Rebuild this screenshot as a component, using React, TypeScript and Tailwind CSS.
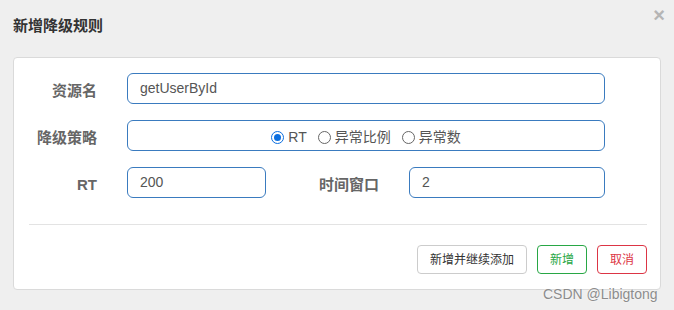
import React from 'react';

const font = { fontFamily: '"Liberation Sans", "Noto Sans CJK SC", sans-serif' };

function Radio({ checked, label }: { checked?: boolean; label: string }) {
  return (
    <label className="flex items-center gap-[4px]">
      <span
        className={`flex h-[13px] w-[13px] items-center justify-center rounded-full border ${
          checked ? 'border-[#0b6fe0]' : 'border-[#666]'
        }`}
      >
        {checked && <span className="h-[7px] w-[7px] rounded-full bg-[#0b6fe0]" />}
      </span>
      <span>{label}</span>
    </label>
  );
}

const inputCls =
  'flex h-[31px] items-center rounded-[6px] border border-[#3a7bbf] bg-white px-3 text-[14px] text-[#555]';
const labelCls = 'pt-[5px] text-right text-[15px] font-bold text-[#666]';

export default function App() {
  return (
    <div style={font} className="relative h-[310px] w-[674px] overflow-hidden bg-[#efefef]">
      <div className="flex h-[57px] items-start justify-between pl-[13px] pr-[9px]">
        <h4 className="pt-[15px] text-[15px] font-bold text-[#333]">新增降级规则</h4>
        <span className="pt-[3px] text-[20px] font-bold leading-[24px] text-[#b5b5b5]">×</span>
      </div>

      <div className="mx-[13px] h-[233px] rounded-[4px] border border-[#dadada] bg-white px-[15px] pt-[15px]">
        <div className="flex flex-col gap-4">
          <div className="flex items-center">
            <span className={`${labelCls} w-[68px]`}>资源名</span>
            <div className={`${inputCls} ml-[30px] w-[478px]`}>getUserById</div>
          </div>
          <div className="flex items-center">
            <span className={`${labelCls} w-[68px]`}>降级策略</span>
            <div className={`${inputCls} ml-[30px] w-[478px] justify-center gap-[11px] pt-[3px] text-[#444]`}>
              <Radio checked label="RT" />
              <Radio label="异常比例" />
              <Radio label="异常数" />
            </div>
          </div>
          <div className="flex items-center">
            <span className={`${labelCls} w-[68px]`}>RT</span>
            <div className={`${inputCls} ml-[30px] w-[139px]`}>200</div>
            <span className={`${labelCls} w-[113px]`}>时间窗口</span>
            <div className={`${inputCls} ml-[30px] w-[196px]`}>2</div>
          </div>
        </div>

        <div className="mt-[26px] h-px w-[618px] bg-[#e3e3e3]" />

        <div className="mt-[20px] flex w-[618px] justify-end gap-[10px] text-[12px]">
          <button className="h-[29px] w-[110px] rounded-[4px] border border-[#ccc] bg-white text-[#333]">
            新增并继续添加
          </button>
          <button className="h-[29px] w-[50px] rounded-[4px] border border-[#28a745] bg-white text-[#28a745]">
            新增
          </button>
          <button className="h-[29px] w-[50px] rounded-[4px] border border-[#dc3545] bg-white text-[#dc3545]">
            取消
          </button>
        </div>
      </div>

      <span className="absolute left-[543px] top-[284px] text-[14px] text-[#8c8c8c] [text-shadow:0_0_2px_#fff]">
        CSDN @Libigtong
      </span>
    </div>
  );
}
